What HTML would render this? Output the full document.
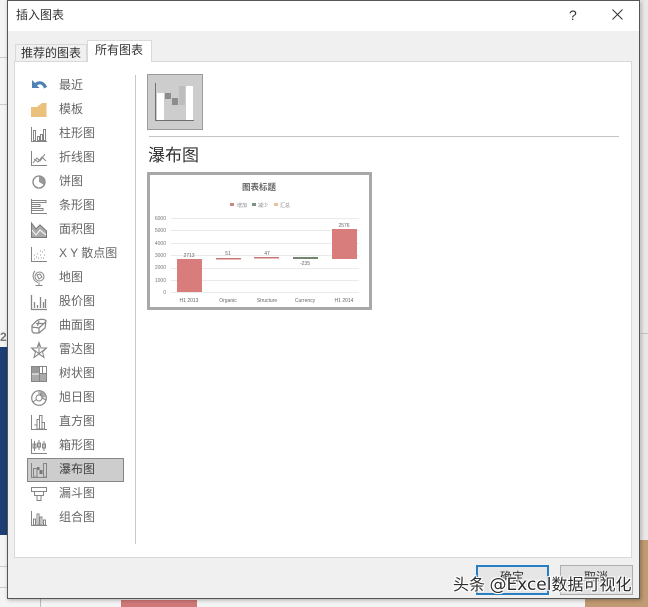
<!DOCTYPE html>
<html lang="zh"><head><meta charset="utf-8">
<style>
html,body{margin:0;padding:0}
body{width:648px;height:607px;position:relative;overflow:hidden;background:#f4f4f4;font-family:"Liberation Sans","Noto Sans CJK SC",sans-serif;}
#w{position:absolute;left:0;top:0;width:648px;height:607px;overflow:hidden;filter:blur(.35px)}
.a{position:absolute}
.t{position:absolute;left:59px;font-size:12px;line-height:16px;color:#666;white-space:nowrap}
svg{position:absolute;overflow:visible}
.ic{left:31px;width:16px;height:16px;fill:none;stroke:#858585;stroke-width:1}
</style></head><body>
<div id="w">
<div class="a" style="left:0;top:347px;width:7px;height:188px;background:#1c3f75"></div>
<div class="a" style="left:0;top:330px;width:7px;height:17px;color:#777;font-size:12px;font-weight:bold;line-height:14px">2</div>
<div class="a" style="left:0;top:57px;width:7px;height:1px;background:#ccc"></div>
<div class="a" style="left:0;top:104px;width:7px;height:1px;background:#ccc"></div>
<div class="a" style="left:0;top:566px;width:7px;height:1px;background:#ccc"></div>
<div class="a" style="left:0;top:587px;width:7px;height:1px;background:#ccc"></div>
<div class="a" style="left:40px;top:599px;width:1px;height:8px;background:#bbb"></div>
<div class="a" style="left:641px;top:0;width:7px;height:540px;background:#e8e8e8"></div>
<div class="a" style="left:121px;top:600px;width:76px;height:7px;background:#d07878"></div>
<div class="a" style="left:640px;top:540px;width:8px;height:67px;background:#c09a72"></div>
<div class="a" style="left:585px;top:599px;width:63px;height:8px;background:#c09a72"></div>
<div class="a" style="left:641px;top:333px;width:7px;height:1px;background:#c4c4c4"></div>

<div class="a" style="left:7px;top:0;width:633px;height:599px;background:#f0f0f0;border:1px solid #555;box-sizing:border-box;box-shadow:1px 1px 4px rgba(0,0,0,.3)"></div>
<div class="a" style="left:8px;top:1px;width:631px;height:30px;background:#fff"></div>
<div class="a" style="left:16px;top:7px;font-size:12px;line-height:16px;color:#333">插入图表</div>
<div class="a" style="left:569px;top:7px;font-size:14px;line-height:16px;color:#333">?</div>
<svg style="left:612px;top:9px" width="11" height="11" fill="none" stroke="#333" stroke-width="1"><path d="M.5.5l10 10M10.500.5l-10 10"/></svg>

<div class="a" style="left:14px;top:61px;width:618px;height:497px;background:#fff;border:1px solid #d9d9d9;box-sizing:border-box"></div>
<div class="a" style="left:15px;top:44px;width:72px;height:18px;background:#f0f0f0;border:1px solid #d9d9d9;box-sizing:border-box"></div>
<div class="a" style="left:21px;top:45px;font-size:12px;line-height:16px;color:#333">推荐的图表</div>
<div class="a" style="left:87px;top:40px;width:65px;height:22px;background:#fff;border:1px solid #d9d9d9;border-bottom:0;box-sizing:border-box"></div>
<div class="a" style="left:95px;top:42px;font-size:12px;line-height:16px;color:#333">所有图表</div>

<div class="a" style="left:135px;top:75px;width:1px;height:469px;background:#c8c8c8"></div>
<div class="a" style="left:27px;top:458px;width:97px;height:24px;background:#cdcdcd;border:1px solid #858585;box-sizing:border-box"></div>

<div class="t" style="top:77px">最近</div>
<div class="t" style="top:101px">模板</div>
<div class="t" style="top:125px">柱形图</div>
<div class="t" style="top:149px">折线图</div>
<div class="t" style="top:173px">饼图</div>
<div class="t" style="top:197px">条形图</div>
<div class="t" style="top:221px">面积图</div>
<div class="t" style="top:245px">X Y 散点图</div>
<div class="t" style="top:269px">地图</div>
<div class="t" style="top:293px">股价图</div>
<div class="t" style="top:317px">曲面图</div>
<div class="t" style="top:341px">雷达图</div>
<div class="t" style="top:365px">树状图</div>
<div class="t" style="top:389px">旭日图</div>
<div class="t" style="top:413px">直方图</div>
<div class="t" style="top:437px">箱形图</div>
<div class="t" style="top:461px;color:#444">瀑布图</div>
<div class="t" style="top:485px">漏斗图</div>
<div class="t" style="top:509px">组合图</div>

<svg class="ic" style="top:78px" viewBox="0 0 16 16"><path d="M1 2V10H8.500L6 7.500C8.500 5.500 11.500 6 13 10.500L16 9C14 3.500 8.500 1.500 4 5Z" fill="#4f81b5" stroke="none"/></svg>
<svg class="ic" style="top:102px" viewBox="0 0 16 16"><path d="M0 5H6L11 1H15.500V15H0Z" fill="#eac07c" stroke="none"/></svg>
<svg class="ic" style="top:126px" viewBox="0 0 16 16"><path d="M.5 1V15.500H16M2.500 4.500h2v10h-2zM6.500 10.500h2v4h-2zM9.500 8.500h2v6h-2zM12.500 3.500h2v11h-2z"/></svg>
<svg class="ic" style="top:150px" viewBox="0 0 16 16"><path d="M.5 1V15.500H16M2 13L6 8L9 11L14 4M3 9L7 12L11 7L15 11"/></svg>
<svg class="ic" style="top:174px" viewBox="0 0 16 16"><circle cx="8" cy="8" r="6" stroke-width="1.300"/><path d="M8 8V2A6 6 0 0 1 13 11Z" fill="#999" stroke="none"/></svg>
<svg class="ic" style="top:198px" viewBox="0 0 16 16"><path d="M.5 1V15.500H16M1 2.500H15V4.500H1M1 6.500H9V8.500H1M1 10.500H12V12.500H1"/></svg>
<svg class="ic" style="top:222px" viewBox="0 0 16 16"><path d="M.5 1L5 7L9 3L15.500 9V15.500H.5Z" fill="#aaa" stroke="#777"/><path d="M1 8L5 13L9 8L15 13" stroke="#fff"/></svg>
<svg class="ic" style="top:246px" viewBox="0 0 16 16"><path d="M.5 1V15.500H16"/><path d="M3 13h1M5 11h1M7 12h1M6 8h1M9 9h1M11 6h1M10 12h1M13 4h1M13 9h1M9 5h1M3 9h1M12 12h1" stroke="#999"/></svg>
<svg class="ic" style="top:270px" viewBox="0 0 16 16"><circle cx="8.500" cy="6.500" r="4.500"/><path d="M4 1C0.500 5 2 11 7 12.500M8 12.500V15M4.500 15.500H11.500M6 5L9 4L11 7L8 9Z"/></svg>
<svg class="ic" style="top:294px" viewBox="0 0 16 16"><path d="M.5 1V15.500H16M3.500 8V14M6.500 11V14M9.500 3V14M12.500 8V14M14.500 5V14" stroke-width="1.300"/></svg>
<svg class="ic" style="top:318px" viewBox="0 0 16 16"><path d="M1 7.500L5.500 3C9 .5 13 1 15 2.500L14 10L8 15H2.500L1 13ZM1 9L8 10L15 3.500M8 10L8 15M5 5.500H12M8 3L6.500 8" stroke-width="1.200"/></svg>
<svg class="ic" style="top:342px" viewBox="0 0 16 16"><path d="M8 .5L10 6L15.500 6L11.500 10L13 15.500L8 12L3 15.500L4.500 10L.5 6L6 6ZM8 .5V12M.5 6L13 15.500M15.500 6L3 15.500"/></svg>
<svg class="ic" style="top:366px" viewBox="0 0 16 16"><rect x=".5" y=".5" width="15" height="15"/><rect x="1" y="1" width="7" height="6.500" fill="#999" stroke="none"/><rect x="1" y="8.500" width="7" height="6.500" fill="#aaa" stroke="none"/><rect x="9" y="8" width="6" height="7" fill="#aaa" stroke="none"/><path d="M8.500 1V15M11.500 1V7.500M8.500 7.500H15.500"/></svg>
<svg class="ic" style="top:390px" viewBox="0 0 16 16"><circle cx="8" cy="8" r="7.300" stroke-width="1.200"/><path d="M9 1A7 7 0 0 1 15 7L11 8L9 5Z" fill="#aaa" stroke="none"/><circle cx="8" cy="8" r="3"/><path d="M8 1V5M2 12L5.500 9.500M11 8L15 10M11 3L9 5"/></svg>
<svg class="ic" style="top:414px" viewBox="0 0 16 16"><path d="M.5 1V15.500H16M3.500 11h2.500v4M6 5.500h2.500V15H6ZM8.500 1.500h2.500V15H8.500ZM11 8.500h2.500V15H11Z"/></svg>
<svg class="ic" style="top:438px" viewBox="0 0 16 16"><path d="M.5 1V15.500H16M3.500 3V13M8 2V12M13 3V13M2 6h3v4H2zM6.500 5h3v4h-3zM11.500 6h3v4h-3z"/></svg>
<svg class="ic" style="top:462px" viewBox="0 0 16 16" stroke="#666"><path d="M.5 1V15.500H16M2.500 6.500H6V15H2.500ZM12.500 1.500H15.500V15H12.500Z"/><rect x="6" y="5" width="2.500" height="3" fill="#777" stroke="none"/><rect x="8.500" y="8" width="3" height="4" fill="#777" stroke="none"/></svg>
<svg class="ic" style="top:486px" viewBox="0 0 16 16"><path d="M.5 1.500H15.500V5.500H.5ZM3.500 5.500H12.500V9.500H3.500ZM6 9.500H10V14.500H6Z"/></svg>
<svg class="ic" style="top:510px" viewBox="0 0 16 16"><path d="M.5 1V15.500H16M2.500 9h2v6h-2zM6 4h2v11h-2zM9 7h2v8h-2zM12.500 10h2v5h-2z"/></svg>

<div class="a" style="left:147px;top:74px;width:56px;height:56px;background:#cdcdcd;border:1px solid #9b9b9b;box-sizing:border-box"></div>
<svg style="left:147px;top:74px" width="56" height="56">
<path d="M8.500 9V46.500H47" fill="none" stroke="#707070"/>
<rect x="10" y="19" width="7" height="27" fill="#fff"/>
<rect x="18" y="19" width="6" height="6" fill="#8c8c8c"/>
<rect x="25" y="24" width="6" height="7" fill="#8c8c8c"/>
<rect x="32" y="12" width="6" height="19" fill="#bdbdbd"/>
<rect x="39" y="12" width="7" height="34" fill="#fff"/>
</svg>
<div class="a" style="left:149px;top:136px;width:470px;height:1px;background:#c4c4c4"></div>
<div class="a" style="left:148px;top:146px;font-size:17px;line-height:20px;color:#333">瀑布图</div>

<div class="a" style="left:147px;top:172px;width:225px;height:138px;background:#fff;border:3px solid #a8a8a8;box-sizing:border-box"></div>
<svg style="left:147px;top:172px" width="225" height="138" font-family="Liberation Sans, Noto Sans CJK SC, sans-serif">
<text x="112" y="18" font-size="8.500" font-weight="bold" fill="#666" text-anchor="middle">图表标题</text>
<rect x="83" y="31" width="4" height="3" fill="#c08a80"/><text x="90" y="35" font-size="5" fill="#888">增加</text>
<rect x="105" y="31" width="4" height="3" fill="#7f8f80"/><text x="111" y="35" font-size="5" fill="#888">减少</text>
<rect x="127" y="31" width="4" height="3" fill="#e8c09a"/><text x="133" y="35" font-size="5" fill="#888">汇总</text>
<g stroke="#eaeaea"><path d="M24 46.500H212M24 58.500H212M24 71.500H212M24 83.500H212M24 96.500H212M24 108.500H212M24 120.500H212"/></g>
<g font-size="5" fill="#777" text-anchor="end"><text x="19" y="48">6000</text><text x="19" y="60">5000</text><text x="19" y="73">4000</text><text x="19" y="85">3000</text><text x="19" y="97">2000</text><text x="19" y="110">1000</text><text x="19" y="122">0</text></g>
<rect x="30" y="87" width="25" height="33" fill="#d87c7c"/>
<rect x="69" y="86" width="25" height="1.500" fill="#c77"/>
<rect x="107" y="85" width="25" height="1.500" fill="#c77"/>
<rect x="146" y="85" width="25" height="2" fill="#74866f"/>
<rect x="185" y="57" width="25" height="30" fill="#d87c7c"/>
<g font-size="5" fill="#666" text-anchor="middle"><text x="42" y="85">2713</text><text x="81" y="83">51</text><text x="120" y="83">47</text><text x="158" y="93">-235</text><text x="197" y="55">2576</text>
<text x="42" y="130">H1 2013</text><text x="81" y="130">Organic</text><text x="120" y="130">Structure</text><text x="158" y="130">Currency</text><text x="197" y="130">H1 2014</text></g>
</svg>

<div class="a" style="left:476px;top:565px;width:73px;height:30px;background:#e6e6e6;border:2px solid #2a7fc0;box-sizing:border-box"></div>
<div class="a" style="left:560px;top:565px;width:73px;height:30px;background:#e1e1e1;border:1px solid #adadad;box-sizing:border-box"></div>
<div class="a" style="left:500px;top:569px;font-size:12px;line-height:16px;color:#333">确定</div>
<div class="a" style="left:584px;top:569px;font-size:12px;line-height:16px;color:#333">取消</div>

<div class="a" style="left:453px;top:575px;font-size:16px;line-height:20px;color:#2e2e2e;white-space:nowrap;text-shadow:0 0 1px #fff,1px 1px 0 #fff,-1px -1px 0 #fff,1px -1px 0 #fff,-1px 1px 0 #fff">头条 <span style="font-family:'DejaVu Sans',sans-serif;font-size:17px">@Excel</span>数据可视化</div>
</div>
</body></html>
